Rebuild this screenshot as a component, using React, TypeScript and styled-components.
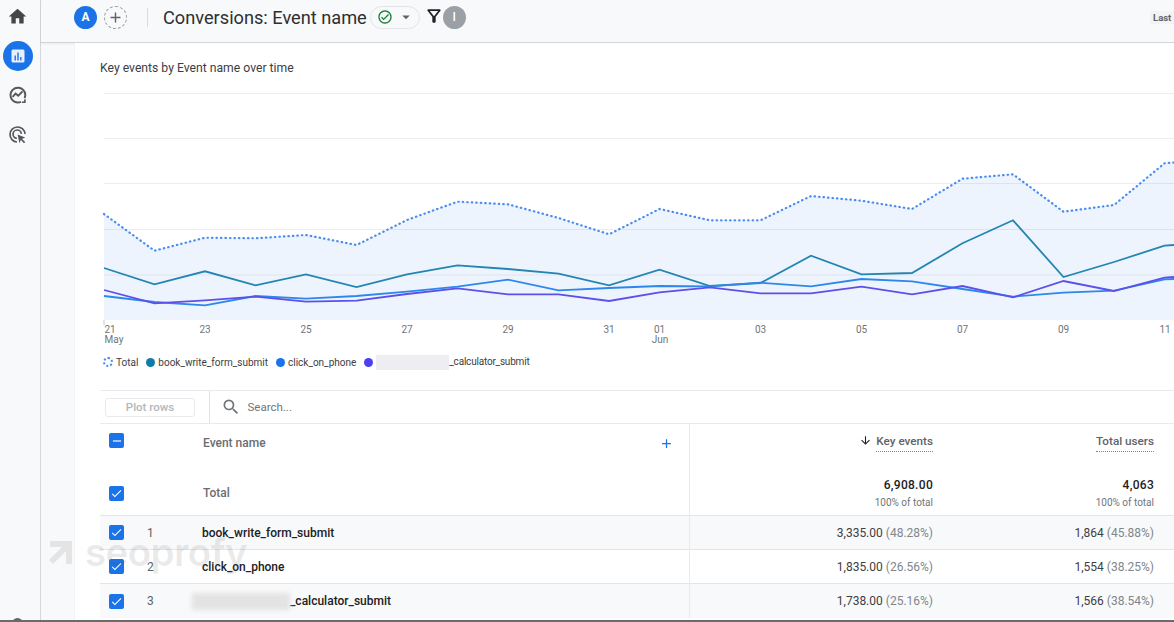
import { ReactNode } from "react";
import styled, { createGlobalStyle } from "styled-components";
import {
  MdAdd,
  MdArrowDownward,
  MdArrowDropDown,
  MdCheck,
  MdHome,
  MdOutlineCheckCircle,
  MdOutlineFilterAlt,
  MdRemove,
  MdSearch,
} from "react-icons/md";

const GlobalStyle = createGlobalStyle`
  html, body {
    margin: 0;
    padding: 0;
    background: #fff;
    overflow: hidden;
  }
  * {
    box-sizing: border-box;
  }
  body {
    font-family: Roboto, "Liberation Sans", sans-serif;
    color: #3c4043;
  }
`;

const Page = styled.div`
  position: relative;
  display: flex;
  width: 1174px;
  height: 622px;
  overflow: hidden;
  border-bottom: 2px solid #6b6b6b;
`;

const Sidebar = styled.nav`
  flex: none;
  width: 41px;
  height: 620px;
  overflow: hidden;
  background: #f8f9fa;
  border-right: 1px solid #d5d7da;
  display: flex;
  flex-direction: column;
  align-items: center;
  padding: 1px 5px 0 0;
`;

const NavItem = styled.div`
  flex: none;
  width: 30px;
  height: 30px;
  margin-bottom: 9.5px;
  display: flex;
  align-items: center;
  justify-content: center;
  color: #444746;
`;

const ActiveNavItem = styled(NavItem)`
  background: #1a73e8;
  border-radius: 50%;
`;

const GearStub = styled.div`
  flex: none;
  margin-top: 459px;
  width: 11px;
  height: 11px;
  border-radius: 50%;
  background: #5f6368;
`;

const Main = styled.div`
  flex: 1;
  min-width: 0;
  display: flex;
  flex-direction: column;
  background: #f8f9fa;
`;

const TopBar = styled.header`
  flex: none;
  height: 43px;
  display: flex;
  align-items: center;
  padding: 0 0 8px 33px;
  border-bottom: 1px solid #d2d4d7;
  box-shadow: 0 1px 2px rgba(60, 64, 67, 0.08);
`;

const Avatar = styled.div`
  width: 23px;
  height: 23px;
  border-radius: 50%;
  background: #1a73e8;
  color: #fff;
  font-size: 12px;
  font-weight: 700;
  display: flex;
  align-items: center;
  justify-content: center;
`;

const AddComparison = styled.div`
  width: 23px;
  height: 23px;
  margin-left: 7px;
  border-radius: 50%;
  border: 1px dashed #9aa0a6;
  color: #5f6368;
  display: flex;
  align-items: center;
  justify-content: center;
`;

const BarDivider = styled.div`
  width: 1px;
  height: 19px;
  margin: 0 15px 0 20px;
  background: #dadce0;
`;

const ReportTitle = styled.h1`
  margin: 0;
  font-size: 18.2px;
  font-weight: 400;
  color: #2d2f31;
  white-space: nowrap;
`;

const StatusChip = styled.div`
  width: 50px;
  height: 23px;
  margin-left: 3px;
  padding-left: 6px;
  border: 1px solid #e3e5e8;
  border-radius: 12px;
  display: flex;
  align-items: center;
  gap: 4px;
  color: #5f6368;
`;

const FilterIcon = styled.div`
  display: flex;
  margin-left: 4px;
  margin-top: -3px;
  color: #202124;
`;

const FilterBadge = styled.div`
  width: 23px;
  height: 23px;
  margin-left: -1px;
  border-radius: 50%;
  background: #9aa0a6;
  color: #fff;
  font-size: 12px;
  font-weight: 500;
  display: flex;
  align-items: center;
  justify-content: center;
`;

const DateChip = styled.div`
  margin-left: auto;
  height: 13px;
  width: 24px;
  padding-left: 3px;
  background: #f1f3f4;
  color: #5f6368;
  font-size: 9.5px;
  font-weight: 700;
  line-height: 13px;
  white-space: nowrap;
`;

const Content = styled.div`
  flex: 1;
  margin-left: 34px;
  background: #fff;
  box-shadow: -1px 0 0 #f1f3f4;
  display: flex;
  flex-direction: column;
  min-height: 0;
`;

const CardTitle = styled.h2`
  margin: 0;
  height: 47px;
  padding: 17px 0 0 25px;
  font-size: 12.2px;
  line-height: 16px;
  font-weight: 400;
  color: #3c4043;
`;

const ChartBlock = styled.div`
  margin-left: 25px;
`;

const ChartSvg = styled.svg`
  display: block;
  width: 1074px;
  height: 255px;
`;

const Legend = styled.div`
  height: 34px;
  margin: 0 0 11px 3px;
  display: flex;
  align-items: center;
  font-size: 10px;
  color: #3c4043;
`;

const LegendItem = styled.div`
  display: flex;
  align-items: center;
  gap: 3px;
  margin-right: 8px;
  white-space: nowrap;
`;

const LegendDot = styled.span<{ $color: string }>`
  width: 9px;
  height: 9px;
  border-radius: 50%;
  background: ${(p) => p.$color};
`;

const LegendRing = styled.span`
  width: 10px;
  height: 10px;
  border-radius: 50%;
  border: 2px dotted #4285f4;
`;

const RedactedLabel = styled.span`
  letter-spacing: -0.2px;
`;

const LegendRedaction = styled.span`
  display: inline-block;
  width: 73px;
  height: 15px;
  vertical-align: middle;
  background: #eeedf1;
`;

const TableBlock = styled.section`
  margin-left: 25px;
  flex: 1;
  min-height: 0;
`;

const Toolbar = styled.div`
  height: 34px;
  display: flex;
  align-items: center;
  border-top: 1px solid #e8eaed;
  border-bottom: 1px solid #e8eaed;
`;

const ToolbarLeft = styled.div`
  width: 109.5px;
  height: 100%;
  padding-left: 5px;
  border-right: 1px solid #e0e2e5;
  display: flex;
  align-items: center;
`;

const PlotButton = styled.div`
  width: 90px;
  height: 19px;
  border: 1px solid #e8eaed;
  border-radius: 3px;
  color: #b4b7ba;
  font-size: 11.5px;
  font-weight: 500;
  display: flex;
  align-items: center;
  justify-content: center;
`;

const SearchBox = styled.div`
  display: flex;
  align-items: center;
  gap: 7px;
  padding-left: 11px;
  color: #70757a;
  font-size: 11.5px;
`;

const Row = styled.div<{ $height: number; $shaded?: boolean; $rule?: boolean }>`
  height: ${(p) => p.$height}px;
  display: grid;
  grid-template-columns: 590px 255px 221px;
  background: ${(p) => (p.$shaded ? "#f8f9fa" : "#fff")};
  border-bottom: ${(p) => (p.$rule ? "1px solid #e3e5e8" : "none")};
`;

const DimensionCell = styled.div<{ $top?: number }>`
  display: grid;
  grid-template-columns: 46px 56px 1fr 30px;
  align-items: ${(p) => (p.$top === undefined ? "center" : "start")};
  padding-top: ${(p) => p.$top ?? 0}px;
  border-right: 1.5px solid #e8eaed;
  font-size: 12px;
`;

const Checkbox = styled.span`
  width: 15px;
  height: 15px;
  margin-left: 9px;
  border-radius: 2px;
  background: #1a73e8;
  color: #fff;
  display: flex;
  align-items: center;
  justify-content: center;
`;

const Rank = styled.span`
  padding-left: 1px;
  color: #5f6368;
  font-size: 12px;
`;

const HeaderLabel = styled.span<{ $shift?: number }>`
  color: #6a6e72;
  font-size: 12px;
  font-weight: 500;
  padding-left: 1px;
  padding-top: ${(p) => p.$shift ?? 0}px;
`;

const EventName = styled.span`
  color: #202124;
  font-weight: 500;
  font-size: 12px;
  white-space: nowrap;
`;

const NameRedaction = styled.span`
  display: inline-block;
  width: 98px;
  height: 17px;
  margin-left: -10px;
  vertical-align: middle;
  background: #e3e3e3;
  filter: blur(2px);
`;

const AddColumn = styled.span`
  display: flex;
  color: #1a73e8;
  padding-top: 3px;
`;

const MetricCell = styled.div`
  padding-right: 12px;
  display: flex;
  align-items: center;
  justify-content: flex-end;
  font-size: 12px;
  color: #3c4043;
  white-space: nowrap;
`;

const MetricHead = styled.div`
  padding: 10px 12px 0 0;
  display: flex;
  align-items: flex-start;
  justify-content: flex-end;
  gap: 4px;
  color: #202124;
`;

const MetricLabel = styled.span`
  color: #5f6368;
  font-size: 11.7px;
  font-weight: 500;
  line-height: 15px;
  padding-bottom: 2px;
  border-bottom: 1px dotted #80868b;
`;

const TotalCell = styled.div`
  padding: 6px 12px 0 0;
  text-align: right;
`;

const TotalValue = styled.div`
  font-size: 12px;
  font-weight: 500;
  line-height: 16px;
  color: #202124;
  letter-spacing: 0.3px;
`;

const TotalShare = styled.div`
  font-size: 10px;
  line-height: 14px;
  margin-top: 3px;
  color: #70757a;
`;

const Share = styled.span`
  margin-left: 3px;
  color: #80868b;
`;

const Watermark = styled.div`
  position: absolute;
  left: 49px;
  top: 529px;
  display: flex;
  align-items: center;
  gap: 13px;
  color: rgba(90, 90, 90, 0.13);
  font-family: Inter, sans-serif;
  font-size: 38.5px;
  font-weight: 600;
  letter-spacing: -0.6px;
  pointer-events: none;
`;

const X0 = 104;
const STEP = 50.5;

const totalLine = [214, 250.7, 237.7, 238.3, 235, 245, 220, 201.7, 204.3, 218, 234.3, 209, 220.3, 220.3, 196, 200.7, 209, 178.7, 174.3, 211.7, 205, 163.3];
const bookLine = [268, 284.3, 271.3, 285.3, 274.3, 287, 274.3, 265.3, 269, 273.7, 285.3, 269.7, 286, 283, 255.7, 274.3, 273, 243.3, 220.3, 277, 262, 245.7];
const phoneLine = [296, 302, 305.3, 296, 298.7, 296, 291.7, 286.7, 279.7, 290.3, 288, 286, 286.3, 282.7, 286.3, 279, 281.3, 289, 296.7, 292.7, 290.7, 279.3];
const calcLine = [290, 303.3, 300.3, 296.7, 301.7, 300.7, 294, 288.3, 294.3, 294.3, 301, 292.3, 287.3, 293.3, 293.3, 286.7, 294.3, 286, 297.3, 281, 291, 277.7];

const toPoints = (values: number[], endY: number) =>
  values.map((y, i) => `${X0 + i * STEP},${y}`).join(" ") + ` 1174,${endY}`;

const gridLines = [93.5, 138.5, 183.5, 229.5, 275];

const ticks = [
  { x: 110, day: "21", month: "May", monthX: 114 },
  { x: 205, day: "23" },
  { x: 306, day: "25" },
  { x: 407, day: "27" },
  { x: 508, day: "29" },
  { x: 609, day: "31" },
  { x: 659.5, day: "01", month: "Jun", monthX: 660 },
  { x: 760.5, day: "03" },
  { x: 861.5, day: "05" },
  { x: 962.5, day: "07" },
  { x: 1063.5, day: "09" },
  { x: 1165, day: "11" },
];

function TrendChart() {
  return (
    <ChartSvg viewBox="100 90 1074 255">
      <polygon points={`104,320 ${toPoints(totalLine, 162.5)} 1174,320`} fill="#eef4fd" />
      {gridLines.map((y) => (
        <line key={y} x1="104" x2="1174" y1={y} y2={y} stroke="#6f7378" strokeOpacity="0.13" strokeWidth="1" />
      ))}
      <polyline points={toPoints(bookLine, 245)} fill="none" stroke="#2385b2" strokeWidth="1.8" />
      <polyline points={toPoints(phoneLine, 279)} fill="none" stroke="#2e87ec" strokeWidth="1.8" />
      <polyline points={toPoints(calcLine, 277)} fill="none" stroke="#5c50ea" strokeWidth="1.8" />
      <polyline
        points={toPoints(totalLine, 162.5)}
        fill="none"
        stroke="#4a8df0"
        strokeWidth="2.2"
        strokeLinecap="round"
        strokeDasharray="0.5 4"
      />
      <line x1="104" x2="104" y1="320" y2="325" stroke="#c4c7cb" strokeWidth="1" />
      {ticks.map((t) => (
        <g key={t.day} fontFamily="Roboto, sans-serif" fontSize="10" fill="#70757a" textAnchor="middle">
          <text x={t.x} y="333">{t.day}</text>
          {t.month && <text x={t.monthX} y="343">{t.month}</text>}
        </g>
      ))}
    </ChartSvg>
  );
}

function ReportsIcon() {
  return (
    <svg width="16" height="16" viewBox="0 0 16 16">
      <rect x="1.5" y="1.5" width="13" height="13" rx="1.5" fill="#e8f0fe" />
      <path d="M4.5 7.5h1.4v5H4.5zM7.3 4.5h1.4v8H7.3zM10.1 9h1.4v3.5h-1.4z" fill="#1a73e8" />
    </svg>
  );
}

function ExploreIcon() {
  return (
    <svg width="20" height="20" viewBox="0 0 20 20" fill="none" stroke="#54585c" strokeWidth="1.9">
      <path d="M16.6 13.2A7.4 7.4 0 1 0 13 16.8" />
      <path d="M4.6 11.8l3-3.2 2.6 2.2 4.2-4.3" />
      <path d="M16.9 14.2v3h-3" strokeWidth="1.6" />
    </svg>
  );
}

function AdvertisingIcon() {
  return (
    <svg width="20" height="20" viewBox="0 0 20 20" fill="none" stroke="#54585c" strokeWidth="1.7">
      <path d="M9 17a7.5 7.5 0 1 1 8-8" />
      <path d="M8.8 13.4a4.2 4.2 0 1 1 4.6-4.6" />
      <path d="M9.6 9.6l7.6 2.9-3.2 1.4 3.2 3.2-1.2 1.2-3.2-3.2-1.4 3.2z" fill="#54585c" stroke="none" />
    </svg>
  );
}

function WatermarkArrow() {
  return (
    <svg width="23" height="24" viewBox="0 0 23 24" fill="currentColor">
      <path d="M1 1h22v23h-6V11L4 24l-4-4L13 7H1z" />
    </svg>
  );
}

function Check({ children }: { children: ReactNode }) {
  return <Checkbox>{children}</Checkbox>;
}

const rows = [
  { rank: 1, name: "book_write_form_submit", events: "3,335.00", eventsShare: "(48.28%)", users: "1,864", usersShare: "(45.88%)", height: 34, shaded: true },
  { rank: 2, name: "click_on_phone", events: "1,835.00", eventsShare: "(26.56%)", users: "1,554", usersShare: "(38.25%)", height: 34, shaded: false },
  { rank: 3, name: "_calculator_submit", events: "1,738.00", eventsShare: "(25.16%)", users: "1,566", usersShare: "(38.54%)", height: 34, shaded: true, redacted: true },
];

export default function App() {
  return (
    <Page>
      <GlobalStyle />
      <Sidebar>
        <NavItem><MdHome size={21} /></NavItem>
        <ActiveNavItem><ReportsIcon /></ActiveNavItem>
        <NavItem><ExploreIcon /></NavItem>
        <NavItem><AdvertisingIcon /></NavItem>
        <GearStub />
      </Sidebar>
      <Main>
        <TopBar>
          <Avatar>A</Avatar>
          <AddComparison><MdAdd size={17} /></AddComparison>
          <BarDivider />
          <ReportTitle>Conversions: Event name</ReportTitle>
          <StatusChip>
            <MdOutlineCheckCircle size={16} color="#188038" />
            <MdArrowDropDown size={18} />
          </StatusChip>
          <FilterIcon><MdOutlineFilterAlt size={20} /></FilterIcon>
          <FilterBadge>I</FilterBadge>
          <DateChip>Last</DateChip>
        </TopBar>
        <Content>
          <CardTitle>Key events by Event name over time</CardTitle>
          <ChartBlock>
            <TrendChart />
            <Legend>
              <LegendItem><LegendRing />Total</LegendItem>
              <LegendItem><LegendDot $color="#137ba8" />book_write_form_submit</LegendItem>
              <LegendItem><LegendDot $color="#1a73e8" />click_on_phone</LegendItem>
              <LegendItem>
                <LegendDot $color="#4b3ff0" />
                <RedactedLabel><LegendRedaction />_calculator_submit</RedactedLabel>
              </LegendItem>
            </Legend>
          </ChartBlock>
          <TableBlock>
            <Toolbar>
              <ToolbarLeft><PlotButton>Plot rows</PlotButton></ToolbarLeft>
              <SearchBox><MdSearch size={20} />Search...</SearchBox>
            </Toolbar>
            <Row $height={47}>
              <DimensionCell $top={9}>
                <Check><MdRemove size={14} /></Check>
                <span />
                <HeaderLabel $shift={3}>Event name</HeaderLabel>
                <AddColumn><MdAdd size={15} /></AddColumn>
              </DimensionCell>
              <MetricHead>
                <MdArrowDownward size={13} />
                <MetricLabel>Key events</MetricLabel>
              </MetricHead>
              <MetricHead><MetricLabel>Total users</MetricLabel></MetricHead>
            </Row>
            <Row $height={45} $rule>
              <DimensionCell>
                <Check><MdCheck size={13} /></Check>
                <span />
                <HeaderLabel>Total</HeaderLabel>
              </DimensionCell>
              <TotalCell>
                <TotalValue>6,908.00</TotalValue>
                <TotalShare>100% of total</TotalShare>
              </TotalCell>
              <TotalCell>
                <TotalValue>4,063</TotalValue>
                <TotalShare>100% of total</TotalShare>
              </TotalCell>
            </Row>
            {rows.map((r) => (
              <Row key={r.rank} $height={r.height} $shaded={r.shaded} $rule={r.rank < 3}>
                <DimensionCell>
                  <Check><MdCheck size={13} /></Check>
                  <Rank>{r.rank}</Rank>
                  <EventName>
                    {r.redacted && <NameRedaction />}
                    {r.name}
                  </EventName>
                </DimensionCell>
                <MetricCell>{r.events}<Share>{r.eventsShare}</Share></MetricCell>
                <MetricCell>{r.users}<Share>{r.usersShare}</Share></MetricCell>
              </Row>
            ))}
          </TableBlock>
        </Content>
      </Main>
      <Watermark><WatermarkArrow />seoprofy</Watermark>
    </Page>
  );
}
